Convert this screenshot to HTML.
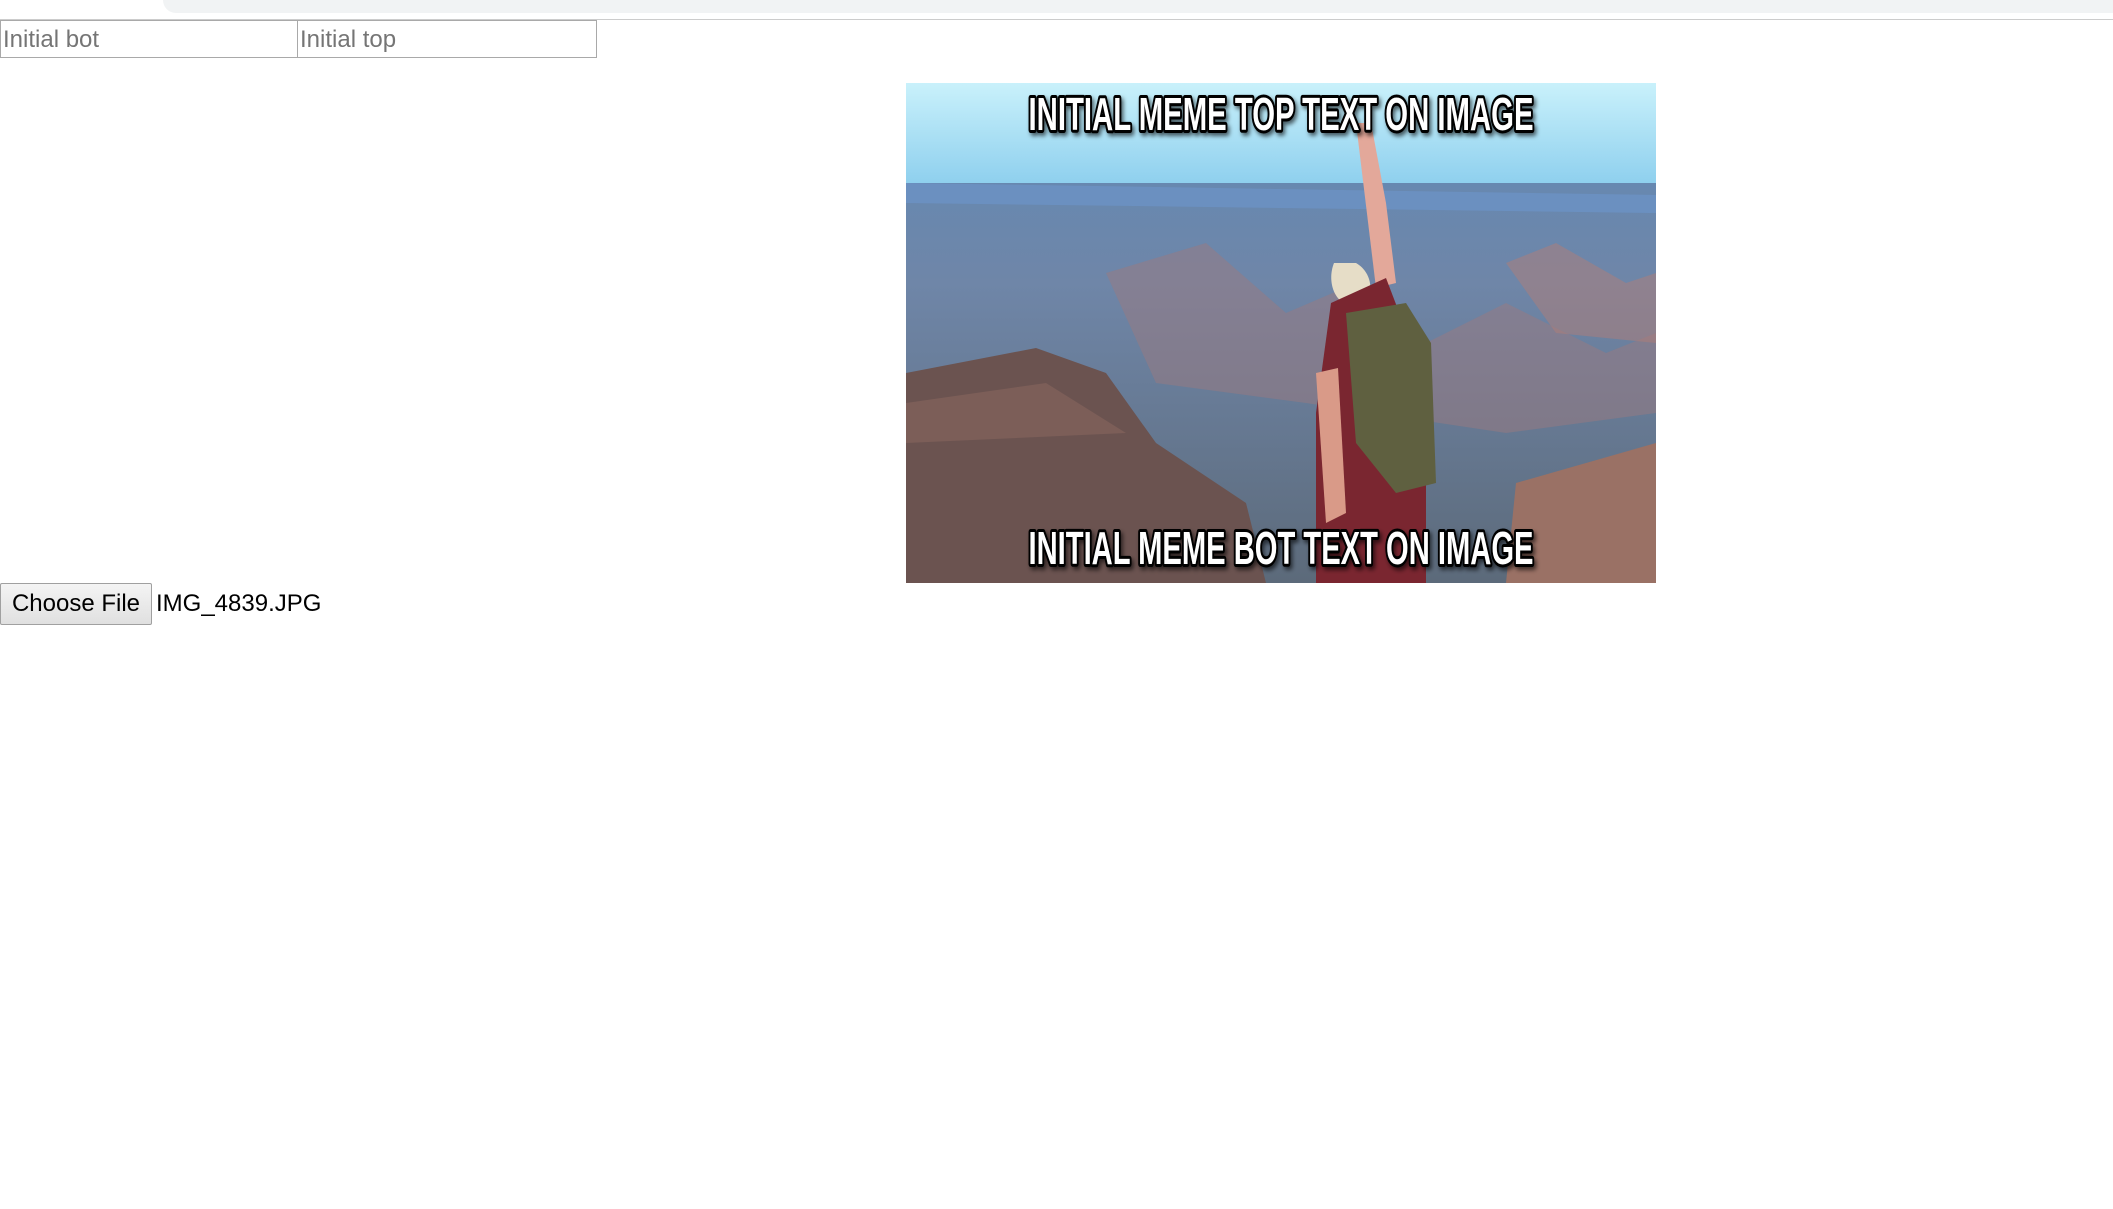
<!DOCTYPE html>
<html><head><style>
html,body{margin:0;padding:0;background:#fff;width:2113px;height:1209px;overflow:hidden;position:relative;font-family:"Liberation Sans",Arial,sans-serif}
.bar{position:absolute;left:163px;top:0;width:1960px;height:13px;background:#f1f3f4;border-bottom-left-radius:14px}
.line{position:absolute;left:0;top:19px;width:2113px;height:1px;background:#ccc}
.inp{position:absolute;top:20px;height:36px;border:1px solid #a9a9a9;font-size:24px;color:#757575;line-height:38px;padding-left:2px;box-sizing:content-box}
.btn{position:absolute;left:0;top:583px;width:150px;height:40px;border:1px solid #a0a0a0;border-radius:2px;background:linear-gradient(#f4f4f4,#e0e0e0);font-size:24px;line-height:40px;text-align:center;color:#000}
.fn{position:absolute;left:156px;top:583px;line-height:42px;font-size:24px;color:#000}
svg{position:absolute;left:906px;top:83px}
.mt{font-family:"Liberation Sans Narrow","Liberation Sans",sans-serif;font-weight:bold;font-size:46px;fill:#fff;stroke:#000;stroke-width:6px;paint-order:stroke;stroke-linejoin:round}
</style></head><body>
<div class="bar"></div><div class="line"></div>
<div class="inp" style="left:0;width:294px">Initial bot</div>
<div class="inp" style="left:297px;width:296px">Initial top</div>
<svg width="750" height="500" viewBox="0 0 750 500">
<defs>
<linearGradient id="sky" x1="0" y1="0" x2="0" y2="1"><stop offset="0" stop-color="#c9f1fb"/><stop offset="1" stop-color="#8fd0ee"/></linearGradient>
<linearGradient id="can" x1="0" y1="0" x2="0" y2="1"><stop offset="0" stop-color="#5f8ab8"/><stop offset=".4" stop-color="#6f86a8"/><stop offset="1" stop-color="#5c6a7a"/></linearGradient>
<filter id="sh"><feDropShadow dx="2" dy="3" stdDeviation="2" flood-color="#000" flood-opacity=".6"/></filter>
</defs>
<rect width="750" height="500" fill="url(#can)"/>
<rect width="750" height="100" fill="url(#sky)"/>
<path d="M0 100 L750 112 L750 130 L0 120Z" fill="#6b90c0"/>
<path d="M200 190 L300 160 L380 230 L450 200 L520 260 L600 220 L700 270 L750 250 L750 330 L600 350 L400 320 L250 300Z" fill="#9a7a80" opacity=".5"/>
<path d="M600 180 L650 160 L720 200 L750 190 L750 260 L650 250Z" fill="#b07d78" opacity=".5"/>
<path d="M0 290 L130 265 L200 290 L250 360 L340 420 L360 500 L0 500Z" fill="#6b5350"/>
<path d="M0 320 L140 300 L220 350 L0 360Z" fill="#7c5e58"/>
<path d="M610 400 L680 380 L750 360 L750 500 L600 500Z" fill="#9a7165"/>
<path d="M428 180 C420 200 430 225 450 222 C470 218 468 190 450 180Z" fill="#e6ddc7"/>
<path d="M450 40 L465 40 L480 120 L490 200 L470 205 Z" fill="#e3a89a"/>
<path d="M425 220 L480 195 L520 300 L520 500 L410 500 L410 330 Z" fill="#7a2630"/>
<path d="M440 230 L500 220 L525 260 L530 400 L490 410 L450 360 Z" fill="#5f6040"/>
<path d="M410 290 L432 285 L440 430 L420 440 Z" fill="#d99a88"/>
<g filter="url(#sh)">
<text x="375" y="35" class="mt" text-anchor="middle" dominant-baseline="middle" textLength="505" lengthAdjust="spacingAndGlyphs">INITIAL MEME TOP TEXT ON IMAGE</text>
<text x="375" y="469" class="mt" text-anchor="middle" dominant-baseline="middle" textLength="505" lengthAdjust="spacingAndGlyphs">INITIAL MEME BOT TEXT ON IMAGE</text>
</g>
</svg>
<div class="btn">Choose File</div>
<div class="fn">IMG_4839.JPG</div>
</body></html>
